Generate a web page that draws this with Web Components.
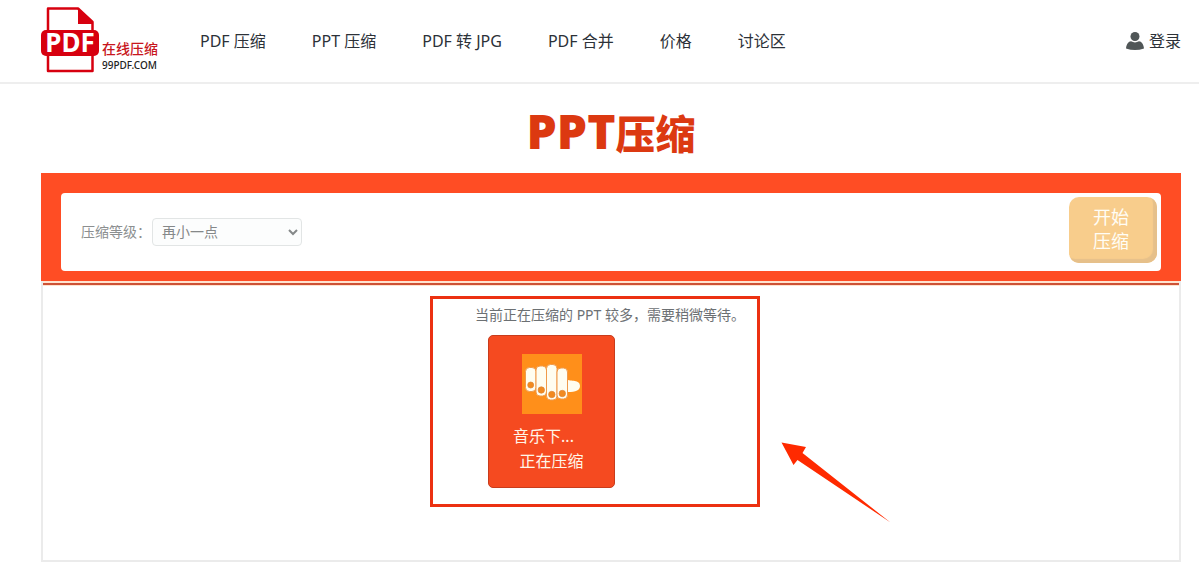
<!DOCTYPE html>
<html lang="zh-CN">
<head>
<meta charset="utf-8">
<meta name="viewport" content="width=device-width, initial-scale=1">
<title>PPT压缩</title>
<style>
  body {
    margin: 0;
    background: #fff;
    color: #2c3138;
    font: 16px/24px "Noto Sans", "Noto Sans CJK SC", sans-serif;
  }
  main { padding: 0 18px 12px 41px; }
</style>
</head>
<body>
<site-header>
  <nav-link href="#pdf">PDF 压缩</nav-link>
  <nav-link href="#ppt">PPT 压缩</nav-link>
  <nav-link href="#jpg">PDF 转 JPG</nav-link>
  <nav-link href="#merge">PDF 合并</nav-link>
  <nav-link href="#price">价格</nav-link>
  <nav-link href="#forum">讨论区</nav-link>
</site-header>
<main>
  <page-title><span slot="latin">PPT</span>压缩</page-title>
  <compress-toolbar></compress-toolbar>
  <task-panel>
    <task-highlight>
      <span slot="notice">当前正在压缩的 PPT 较多，需要稍微等待。</span>
      <file-card><span slot="name">音乐下...</span><span slot="status">正在压缩</span></file-card>
    </task-highlight>
  </task-panel>
</main>
<script>
function define(name, markup) {
  const template = document.createElement('template');
  template.innerHTML = markup;
  customElements.define(name, class extends HTMLElement {
    constructor() {
      super();
      this.attachShadow({ mode: 'open' }).append(template.content.cloneNode(true));
    }
    connectedCallback() {
      const link = this.shadowRoot.querySelector('a[data-link]');
      if (link) link.href = this.getAttribute('href') || '#';
    }
  });
}

define('site-logo', `
<style>
  :host { display: block; }
  a { display: grid; grid-template-columns: 58px auto; column-gap: 3px; color: #c8161d; text-decoration: none; }
  .mark { display: grid; place-items: center; }
  .mark > * { grid-area: 1 / 1; }
  .mark b { color: #fff; font-size: 26px; line-height: 28px; padding-top: 4px; }
  svg { display: block; }
  .words { align-self: end; display: flex; flex-direction: column; padding-bottom: 1px; }
  .cn { font-size: 14px; line-height: 18px; font-weight: 500; }
  .en { font-size: 10px; line-height: 14px; font-weight: 500; color: #222; }
</style>
<a href="#home">
  <span class="mark">
    <svg width="58" height="66" viewBox="0 0 58 66" aria-hidden="true">
      <path d="M7 1.500H37L51.500 15V64H7Z" fill="#fff" stroke="#d7000f" stroke-width="2.500" stroke-linejoin="round"/>
      <path d="M37 1.500L51.500 15V17H37Z" fill="#d7000f"/>
      <rect x="0" y="23" width="58" height="26" rx="5" fill="#d7000f"/>
    </svg>
    <b>PDF</b>
  </span>
  <span class="words"><span class="cn">在线压缩</span><span class="en">99PDF.COM</span></span>
</a>`);

define('nav-link', `
<style>
  :host { display: block; }
  a { color: inherit; text-decoration: none; white-space: nowrap; }
</style>
<a data-link href="#"><slot></slot></a>`);

define('site-header', `
<style>
  :host { display: block; border-bottom: 2px solid #eee; }
  header { display: flex; align-items: center; padding: 7px 18px 9px 41px; }
  nav { display: flex; gap: 46px; margin-left: 42px; flex: 1; padding-top: 2px; }
  .login { display: flex; align-items: center; gap: 5px; padding-top: 2px; color: inherit; text-decoration: none; }
</style>
<header>
  <site-logo></site-logo>
  <nav><slot></slot></nav>
  <a class="login" href="#login">
    <svg width="18" height="18" viewBox="0 0 18 18" fill="#505657" aria-hidden="true">
      <circle cx="9" cy="4.500" r="4.500"/>
      <path d="M0 16.500C.5 12 2.500 9.500 5 9.300Q9 11.500 13 9.300C15.500 9.500 17.500 12 18 16.500Q9 19.500 0 16.500Z"/>
    </svg>登录</a>
</header>`);

define('page-title', `
<style>
  :host { display: block; }
  h1 {
    display: flex; justify-content: center; align-items: baseline;
    margin: 0; padding: 20px 0 12px; color: #dc3911;
    font-size: 40px; line-height: 54px; font-weight: 900;
  }
  ::slotted([slot=latin]) { font-size: 48px; }
</style>
<h1><slot name="latin"></slot><slot></slot></h1>`);

define('level-select', `
<style>
  :host { display: flex; align-items: center; gap: 1px; color: #8c8f90; font-size: 14px; }
  .field { display: grid; align-items: center; width: 150px; }
  .field > * { grid-area: 1 / 1; }
  select {
    appearance: none; box-sizing: border-box; width: 100%; height: 28px; margin: 0; padding: 0 24px 0 9px;
    border: 1px solid #e2e5e5; border-radius: 4px; background: #fcfdfd; color: #858889;
    font: inherit; line-height: 24px;
  }
  svg { justify-self: end; margin-right: 4px; pointer-events: none; }
</style>
<label for="level">压缩等级：</label>
<span class="field">
  <select id="level"><option>再小一点</option><option>标准</option></select>
  <svg width="10" height="8" viewBox="0 0 10 8" aria-hidden="true"><path d="M1 2L5 6L9 2" fill="none" stroke="#858889" stroke-width="2"/></svg>
</span>`);

define('start-button', `
<style>
  :host { display: block; }
  button {
    display: block; width: 88px; margin: 0; padding: 8px 4px 10px 0; border: 0; border-radius: 10px;
    background: #f8cd8c; box-shadow: inset -4px -4px 1px #e6c08a; color: #fffdf5;
    font: inherit; font-size: 18px; line-height: 24px; cursor: pointer;
  }
  button span { display: block; }
</style>
<button type="button"><span>开始</span><span>压缩</span></button>`);

define('compress-toolbar', `
<style>
  :host { display: block; background: #ff4d24; padding: 20px 20px 10px; }
  .bar {
    display: flex; align-items: center; justify-content: space-between;
    background: #fff; border-radius: 4px; padding: 4px 4px 8px 20px;
  }
  level-select { padding-top: 4px; }
</style>
<div class="bar"><level-select></level-select><start-button></start-button></div>`);

define('task-panel', `
<style>
  :host { display: block; border: solid #ebebeb; border-width: 0 2px 2px; }
  .rule { border: solid #ffe3cf; border-width: 2px 0 1px; height: 2px; background: #cd5236; }
  .body { display: flex; justify-content: center; padding: 10px 32px 53px 0; }
</style>
<div class="rule"></div>
<div class="body"><slot></slot></div>`);

define('task-highlight', `
<style>
  :host { display: block; position: relative; box-sizing: border-box; width: 330px; border: 3px solid #ec3111; padding: 4px 0 16px; }
  p { margin: 0 0 8px 42px; color: #6c7073; font-size: 14px; line-height: 24px; white-space: nowrap; }
  .files { padding-left: 55px; }
  .arrow { position: absolute; left: 347px; top: 141px; pointer-events: none; }
</style>
<p><slot name="notice"></slot></p>
<div class="files"><slot></slot></div>
<svg class="arrow" width="112" height="86" viewBox="0 0 112 86" aria-hidden="true">
  <path d="M1.500 2.500L26 7L22.500 13L110.500 82.500L17.500 20L13.500 25Z" fill="#ff2a00"/>
</svg>`);

define('file-card', `
<style>
  :host {
    display: flex; flex-direction: column; align-items: center; box-sizing: border-box; width: 127px;
    padding: 18px 0 13px; border: 1px solid #c83c1c; border-radius: 5px; background: #f54a20;
    color: #fff6e8; font-size: 16px; line-height: 25px;
  }
  svg { display: block; margin-bottom: 10px; }
  .name { padding-right: 16px; }
</style>
<svg width="60" height="60" viewBox="0 0 60 60" aria-hidden="true">
  <rect width="60" height="60" fill="#ff8f1a"/>
  <path d="M44 25C49 28 58 25 58 32C58 38 50 38 44 38Z" fill="#fffdf0"/>
  <g fill="#fffdf0" stroke="#f09a4a" stroke-width="1">
    <rect x="3.500" y="13.500" width="10.500" height="24" rx="4"/>
    <rect x="14" y="12" width="10.500" height="30" rx="4"/>
    <rect x="24.500" y="10.500" width="10.500" height="35.500" rx="4"/>
    <rect x="35" y="14" width="10.500" height="31" rx="4"/>
  </g>
  <g fill="#f28a20" stroke="#dd8534" stroke-width=".7">
    <circle cx="8.700" cy="31" r="3"/><circle cx="19.300" cy="36" r="3.200"/>
    <circle cx="29.800" cy="40.500" r="3.200"/><circle cx="40.300" cy="39.500" r="3.200"/>
  </g>
</svg>
<span class="name"><slot name="name"></slot></span>
<span><slot name="status"></slot></span>`);
</script>
</body>
</html>
